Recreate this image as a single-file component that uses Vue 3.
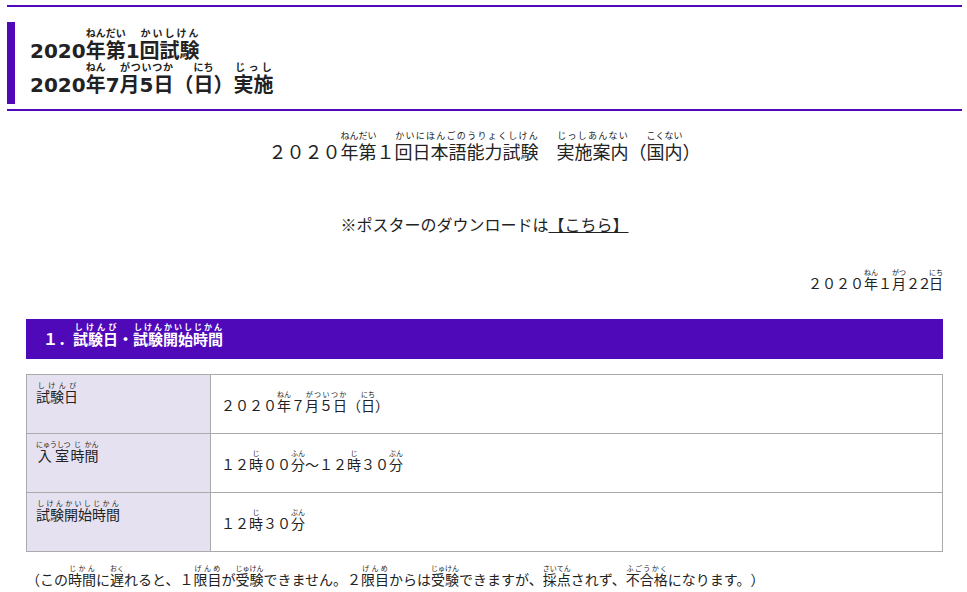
<script setup>
</script>

<template>
  <div class="page">
    <header class="banner">
      <h1 class="banner-title"><span class="line">2020<ruby>年第<rt>ねんだい</rt></ruby>1<ruby>回試験<rt>かいしけん</rt></ruby></span><span class="line">2020<ruby>年<rt>ねん</rt></ruby>7<ruby>月5日<rt>がついつか</rt></ruby>（<ruby>日<rt>にち</rt></ruby>）<ruby>実施<rt>じっし</rt></ruby></span></h1>
    </header>

    <main class="content">
      <p class="lead">２０２０<ruby>年第<rt>ねんだい</rt></ruby>１<ruby>回日本語能力試験<rt>かいにほんごのうりょくしけん</rt></ruby>　<ruby>実施案内<rt>じっしあんない</rt></ruby>（<ruby>国内<rt>こくない</rt></ruby>）</p>
      <p class="poster"><span class="cjk">※</span>ポスターのダウンロードは<a class="poster-link" href="#">【こちら】</a></p>
      <p class="date">２０２０<ruby>年<rt>ねん</rt></ruby>１<ruby>月<rt>がつ</rt></ruby><span class="tight">２２</span><ruby>日<rt>にち</rt></ruby></p>

      <h2 class="section">１．<ruby>試験日<rt>しけんび</rt></ruby>・<ruby>試験<rt>しけん</rt></ruby><ruby>開始<rt>かいし</rt></ruby><ruby>時間<rt>じかん</rt></ruby></h2>

      <table class="schedule">
        <tbody>
          <tr>
            <th><ruby>試験日<rt>しけんび</rt></ruby></th>
            <td>２０２０<ruby>年<rt>ねん</rt></ruby>７<ruby>月５日<rt>がついつか</rt></ruby>（<ruby>日<rt>にち</rt></ruby>）</td>
          </tr>
          <tr>
            <th><ruby>入室<rt>にゅうしつ</rt></ruby><ruby>時<rt>じ</rt></ruby><ruby>間<rt>かん</rt></ruby></th>
            <td>１２<ruby>時<rt>じ</rt></ruby>００<ruby>分<rt>ふん</rt></ruby>～１２<ruby>時<rt>じ</rt></ruby>３０<ruby>分<rt>ぷん</rt></ruby></td>
          </tr>
          <tr>
            <th><ruby>試験<rt>しけん</rt></ruby><ruby>開始<rt>かいし</rt></ruby><ruby>時間<rt>じかん</rt></ruby></th>
            <td>１２<ruby>時<rt>じ</rt></ruby>３０<ruby>分<rt>ぷん</rt></ruby></td>
          </tr>
        </tbody>
      </table>

      <p class="note">（この<ruby>時間<rt>じかん</rt></ruby>に<ruby>遅<rt>おく</rt></ruby>れると、１<ruby>限目<rt>げんめ</rt></ruby>が<ruby>受験<rt>じゅけん</rt></ruby>できません。２<ruby>限目<rt>げんめ</rt></ruby>からは<ruby>受験<rt>じゅけん</rt></ruby>できますが、<ruby>採点<rt>さいてん</rt></ruby>されず、<ruby>不合格<rt>ふごうかく</rt></ruby>になります。）</p>
    </main>
  </div>
</template>

<style>
html, body { margin: 0; background: #fff; }
</style>

<style scoped>
.page {
  height: 592px;
  overflow: hidden;
  padding: 5px 5px 0 7px;
  box-sizing: border-box;
  font-family: "DejaVu Sans", "Noto Sans CJK JP", sans-serif;
  color: #222;
  text-spacing-trim: space-all;
}
.cjk { font-family: "Noto Sans CJK JP", sans-serif; }
.tight { letter-spacing: -2.5px; }
rt { line-height: 1; }
.banner {
  border-top: 2px solid #5009b9;
  border-bottom: 2px solid #5009b9;
  padding: 15px 0 5px;
}
.banner-title {
  margin: 0;
  border-left: 8px solid #5009b9;
  padding: 6px 0 0 15px;
  font-size: 20px;
  font-weight: 700;
  height: 82px;
  box-sizing: border-box;
}
.line { display: block; height: 34px; line-height: 34px; }
.banner-title rt { font-size: 10px; padding-bottom: 1px; }
.content { padding: 0 19px; }
.lead {
  margin: 20px 0 0;
  text-align: center;
  font-size: 18px;
  line-height: 30px;
}
.lead rt { font-size: 9px; padding-bottom: 2px; }
.poster {
  margin: 44px 0 0;
  text-align: center;
  font-size: 16px;
  line-height: 24px;
}
.poster-link { color: inherit; text-decoration: underline; }
.date {
  margin: 31px 0 0;
  text-align: right;
  font-size: 14px;
  line-height: 24px;
}
.date rt, .schedule rt, .note rt { font-size: 7px; }
.section {
  margin: 23px 0 0;
  background: #5009b9;
  color: #fff;
  height: 40px;
  box-sizing: border-box;
  padding: 9px 0 0 17px;
  font-size: 15px;
  line-height: 24px;
  font-weight: 700;
}
.section rt { font-size: 8px; }
.schedule {
  margin-top: 15px;
  width: 100%;
  border-collapse: collapse;
  font-size: 14px;
  table-layout: fixed;
}
.schedule th, .schedule td {
  border: 1px solid #aaa;
  height: 59px;
  box-sizing: border-box;
}
.schedule th {
  width: 184px;
  background: #e5e1f0;
  font-weight: 400;
  text-align: left;
  vertical-align: top;
  padding: 10px 9px;
  line-height: 24px;
}
.schedule td {
  padding: 2px 10px 0;
  line-height: 24px;
  vertical-align: middle;
}
.note {
  margin: 13px 0 0;
  font-size: 14px;
  line-height: 24px;
}
</style>
